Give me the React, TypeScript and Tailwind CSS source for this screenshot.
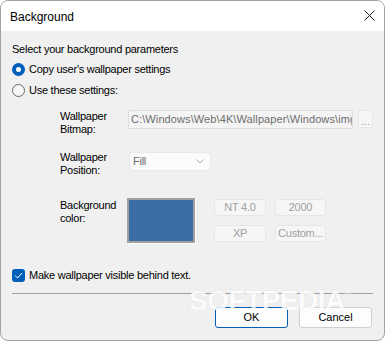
import React from "react";

const DisabledButton = ({ children }: { children: React.ReactNode }) => (
  <div className="h-[17px] flex items-center justify-center rounded-[3px] border border-[#e6e6e6] bg-[#f6f6f6] text-[#a0a0a0]">
    {children}
  </div>
);

export default function App() {
  return (
    <div className="w-[385px] h-[341px] bg-white font-['Liberation_Sans',Arial,sans-serif]">
      <div className="relative w-full h-full flex flex-col rounded-[8px] border border-[#a3a3a3] overflow-hidden bg-[#f0f0f0]">
        {/* title bar */}
        <div className="h-[30px] bg-white flex items-center justify-between pl-[9px] pr-[9px]">
          <span className="text-[12px] leading-[14px] text-black pt-[1px]">Background</span>
          <svg width="11" height="11" viewBox="0 0 11 11" className="mb-[1px]">
            <path d="M0.5 0.5 L10.5 10.5 M10.5 0.5 L0.5 10.5" stroke="#1a1a1a" strokeWidth="1" fill="none" />
          </svg>
        </div>

        {/* body */}
        <div className="flex-1 flex flex-col px-[11px] pt-[12px] text-[11px] leading-[13px] tracking-[-0.25px] text-black">
          <div>Select your background parameters</div>

          <div className="mt-[7px] h-[13px] flex items-center gap-[4px]">
            <div className="w-[13px] h-[13px] rounded-full bg-[#005fb8] flex items-center justify-center">
              <div className="w-[5px] h-[5px] rounded-full bg-white" />
            </div>
            <span>Copy user's wallpaper settings</span>
          </div>

          <div className="mt-[8px] h-[13px] flex items-center gap-[4px]">
            <div className="w-[13px] h-[13px] rounded-full border border-[#6b6b6b] bg-[#f6f6f6]" />
            <span>Use these settings:</span>
          </div>

          {/* bitmap */}
          <div className="mt-[13px] h-[26px] flex items-start pl-[48px]">
            <div className="w-[68px]">
              Wallpaper
              <br />
              Bitmap:
            </div>
            <div className="w-[225px] h-[19px] border border-[#dedede] bg-[#f4f4f4] text-[#6d6d6d] pl-[2px] flex items-center overflow-hidden tracking-[0.1px]">
              <span className="block w-full min-w-0 overflow-hidden whitespace-nowrap">
                C:\Windows\Web\4K\Wallpaper\Windows\img0.jpg
              </span>
            </div>
            <div className="ml-[5px] w-[15px] h-[18px] rounded-[3px] border border-[#e6e6e6] bg-[#f6f6f6] text-[#a0a0a0] flex items-end justify-center pb-[2px] leading-[8px]">
              ...
            </div>
          </div>

          {/* position */}
          <div className="mt-[15px] h-[26px] flex items-start pl-[48px]">
            <div className="w-[69px]">
              Wallpaper
              <br />
              Position:
            </div>
            <div className="mt-[1px] w-[82px] h-[19px] rounded-[3px] border border-[#e8e8e8] bg-[#fbfbfb] text-[#6d6d6d] flex items-center justify-between pl-[3px] pr-[6px]">
              <span>Fill</span>
              <svg width="8" height="5" viewBox="0 0 8 5">
                <path d="M0.5 0.5 L4 4 L7.5 0.5" stroke="#a8a8a8" strokeWidth="1" fill="none" />
              </svg>
            </div>
          </div>

          {/* color */}
          <div className="mt-[21px] h-[45px] flex items-start pl-[48px]">
            <div className="w-[67px] pt-[1px]">
              Background
              <br />
              color:
            </div>
            <div className="w-[68px] h-[45px] border-2 border-[#a0a0a0] bg-[#3a6ea5] shadow-[1px_1px_0_#ffffff]" />
            <div className="ml-[19px] mt-[1px] grid grid-cols-[52px_51px] gap-x-[9px] gap-y-[9px]">
              <DisabledButton>NT 4.0</DisabledButton>
              <DisabledButton>2000</DisabledButton>
              <DisabledButton>XP</DisabledButton>
              <DisabledButton>Custom...</DisabledButton>
            </div>
          </div>

          {/* checkbox */}
          <div className="mt-[26px] h-[13px] flex items-center gap-[4px]">
            <div className="w-[13px] h-[13px] rounded-[3px] bg-[#005fb8] flex items-center justify-center">
              <svg width="9" height="7" viewBox="0 0 9 7">
                <path d="M1 3.5 L3.5 6 L8 1" stroke="#ffffff" strokeWidth="1" fill="none" />
              </svg>
            </div>
            <span>Make wallpaper visible behind text.</span>
          </div>

          <div className="mt-[11px] h-px bg-[#a0a0a0]" />

          <div className="mt-[13px] flex justify-end gap-[11px] pr-[1px] tracking-normal">
            <div className="w-[73px] h-[21px] rounded-[3px] border border-[#005fb8] bg-[#fdfdfd] flex items-center justify-center">
              OK
            </div>
            <div className="w-[73px] h-[21px] rounded-[3px] border border-[#d0d0d0] bg-[#fdfdfd] flex items-center justify-center">
              Cancel
            </div>
          </div>
        </div>

        {/* watermark */}
        <div className="absolute left-[188px] top-[285px] flex items-start text-white font-bold opacity-80 [text-shadow:0_0_1px_rgba(0,0,0,0.12)] pointer-events-none">
          <span className="text-[28px] leading-[30px] tracking-[-0.5px]">SOFTPEDIA</span>
          <span className="text-[9px] leading-[10px] mt-[2px]">®</span>
        </div>
      </div>
    </div>
  );
}
